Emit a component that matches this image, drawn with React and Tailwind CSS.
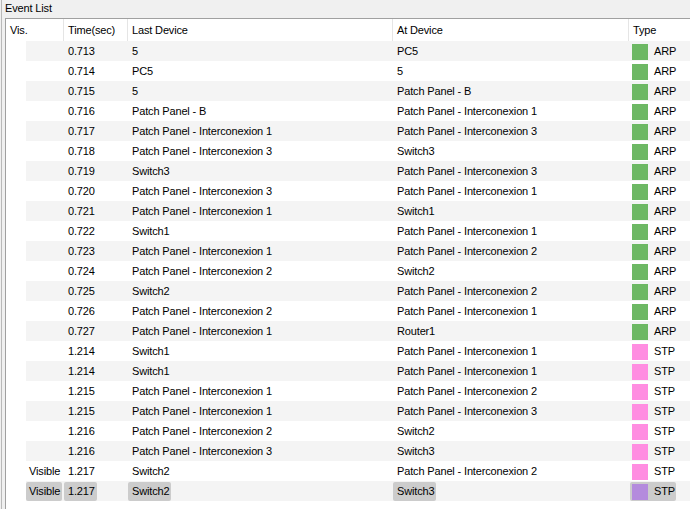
import React from "react";

const ARP = "ARP";
const STP = "STP";

const events = [
  { vis: "", time: "0.713", last: "5", at: "PC5", type: ARP },
  { vis: "", time: "0.714", last: "PC5", at: "5", type: ARP },
  { vis: "", time: "0.715", last: "5", at: "Patch Panel - B", type: ARP },
  { vis: "", time: "0.716", last: "Patch Panel - B", at: "Patch Panel - Interconexion 1", type: ARP },
  { vis: "", time: "0.717", last: "Patch Panel - Interconexion 1", at: "Patch Panel - Interconexion 3", type: ARP },
  { vis: "", time: "0.718", last: "Patch Panel - Interconexion 3", at: "Switch3", type: ARP },
  { vis: "", time: "0.719", last: "Switch3", at: "Patch Panel - Interconexion 3", type: ARP },
  { vis: "", time: "0.720", last: "Patch Panel - Interconexion 3", at: "Patch Panel - Interconexion 1", type: ARP },
  { vis: "", time: "0.721", last: "Patch Panel - Interconexion 1", at: "Switch1", type: ARP },
  { vis: "", time: "0.722", last: "Switch1", at: "Patch Panel - Interconexion 1", type: ARP },
  { vis: "", time: "0.723", last: "Patch Panel - Interconexion 1", at: "Patch Panel - Interconexion 2", type: ARP },
  { vis: "", time: "0.724", last: "Patch Panel - Interconexion 2", at: "Switch2", type: ARP },
  { vis: "", time: "0.725", last: "Switch2", at: "Patch Panel - Interconexion 2", type: ARP },
  { vis: "", time: "0.726", last: "Patch Panel - Interconexion 2", at: "Patch Panel - Interconexion 1", type: ARP },
  { vis: "", time: "0.727", last: "Patch Panel - Interconexion 1", at: "Router1", type: ARP },
  { vis: "", time: "1.214", last: "Switch1", at: "Patch Panel - Interconexion 1", type: STP },
  { vis: "", time: "1.214", last: "Switch1", at: "Patch Panel - Interconexion 1", type: STP },
  { vis: "", time: "1.215", last: "Patch Panel - Interconexion 1", at: "Patch Panel - Interconexion 2", type: STP },
  { vis: "", time: "1.215", last: "Patch Panel - Interconexion 1", at: "Patch Panel - Interconexion 3", type: STP },
  { vis: "", time: "1.216", last: "Patch Panel - Interconexion 2", at: "Switch2", type: STP },
  { vis: "", time: "1.216", last: "Patch Panel - Interconexion 3", at: "Switch3", type: STP },
  { vis: "Visible", time: "1.217", last: "Switch2", at: "Patch Panel - Interconexion 2", type: STP },
  { vis: "Visible", time: "1.217", last: "Switch2", at: "Switch3", type: STP, selected: true },
];

const Cell = ({ selected, className, children }) => (
  <span
    className={
      "inline-flex items-center h-[19px] rounded-[2px] " +
      (selected ? "bg-[#cccccc] " : "") +
      className
    }
  >
    {children}
  </span>
);

const EventRow = ({ ev, index }) => {
  const sel = !!ev.selected;
  const swatch =
    ev.type === ARP ? "bg-[#6db864]" : sel ? "bg-[#b48bdd]" : "bg-[#ff8de1]";
  return (
    <div className="flex h-5">
      <div className="w-5 shrink-0" />
      <div
        className={
          "flex flex-1 items-end h-5 " + (index % 2 === 0 ? "bg-[#f4f4f4]" : "")
        }
      >
        <div className="w-[38px] shrink-0 h-5 flex items-center">
          {ev.vis && (
            <Cell selected={sel} className="pl-[3px] pr-[2px] mt-px">
              {ev.vis}
            </Cell>
          )}
        </div>
        <div className="w-[64px] shrink-0 h-5 flex items-center">
          <Cell selected={sel} className="pl-[4px] pr-[2px] mt-px">
            {ev.time}
          </Cell>
        </div>
        <div className="w-[265px] shrink-0 h-5 flex items-center">
          <Cell selected={sel} className="pl-[4px] pr-[2px] mt-px">
            {ev.last}
          </Cell>
        </div>
        <div className="w-[236px] shrink-0 h-5 flex items-center">
          <Cell selected={sel} className="pl-[4px] pr-[2px] mt-px">
            {ev.at}
          </Cell>
        </div>
        <div className="flex-1 h-5 flex items-center">
          <Cell selected={sel} className="ml-px pl-[2px] pr-[1px] mt-px">
            <span className={"w-4 h-4 mr-[6px] " + swatch} />
            {ev.type}
          </Cell>
        </div>
      </div>
    </div>
  );
};

export default function App() {
  return (
    <div className="w-[690px] h-[509px] overflow-hidden bg-[#f0f0f0] font-['Liberation_Sans',Arial,sans-serif] text-[11px] tracking-[-0.15px] text-black">
      <div className="ml-px h-full border-l border-[#b9b9b9] flex flex-col">
        <div className="h-[18px] pl-[3px] flex items-center leading-none pb-px">
          Event List
        </div>
        <div className="ml-[3px] flex-1 bg-white border-l border-t border-[#a0a0a0]">
          <div className="flex h-[22px]">
            <div className="w-[58px] shrink-0 pl-[4px] flex items-center border-r border-[#e5e5e5]">
              Vis.
            </div>
            <div className="w-[64px] shrink-0 pl-[4px] flex items-center border-r border-[#e5e5e5]">
              Time(sec)
            </div>
            <div className="w-[265px] shrink-0 pl-[4px] flex items-center border-r border-[#e5e5e5]">
              Last Device
            </div>
            <div className="w-[236px] shrink-0 pl-[4px] flex items-center border-r border-[#e5e5e5]">
              At Device
            </div>
            <div className="flex-1 pl-[4px] flex items-center">Type</div>
          </div>
          {events.map((ev, i) => (
            <EventRow key={i} ev={ev} index={i} />
          ))}
        </div>
      </div>
    </div>
  );
}
